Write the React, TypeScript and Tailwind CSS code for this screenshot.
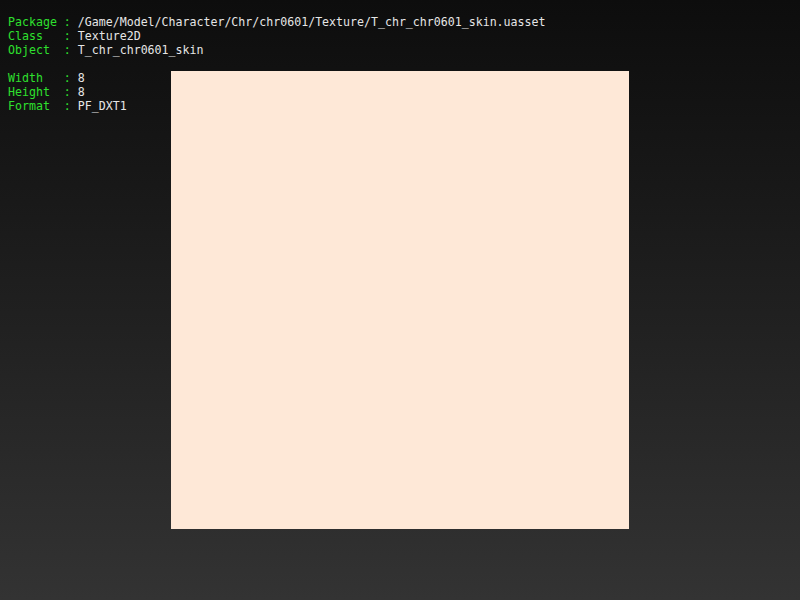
export default function App() {
  const header = [
    ["Package", "/Game/Model/Character/Chr/chr0601/Texture/T_chr_chr0601_skin.uasset"],
    ["Class", "Texture2D"],
    ["Object", "T_chr_chr0601_skin"],
  ];
  const info = [
    ["Width", "8"],
    ["Height", "8"],
    ["Format", "PF_DXT1"],
  ];

  const row = ([k, v]: string[]) => (
    <div key={k} className="flex h-[14px] leading-[14px] whitespace-pre">
      <span className="text-[#2ee02e]">{k.padEnd(8, " ")}: </span>
      <span className="text-[#e6e6e6]">{v}</span>
    </div>
  );

  return (
    <div className="grid h-[600px] w-[800px] bg-gradient-to-b from-[#0d0d0d] to-[#333333] overflow-hidden">
      {/* texture preview */}
      <div className="col-start-1 row-start-1 place-self-center w-[458px] h-[458px] bg-[#fee8d7]" />

      {/* asset info */}
      <div
        className="col-start-1 row-start-1 self-start justify-self-start pt-[15px] pl-[8px] text-[11.6px]"
        style={{ fontFamily: '"DejaVu Sans Mono", "Liberation Mono", monospace' }}
      >
        {header.map(row)}
        <div className="h-[14px]" />
        {info.map(row)}
      </div>
    </div>
  );
}
